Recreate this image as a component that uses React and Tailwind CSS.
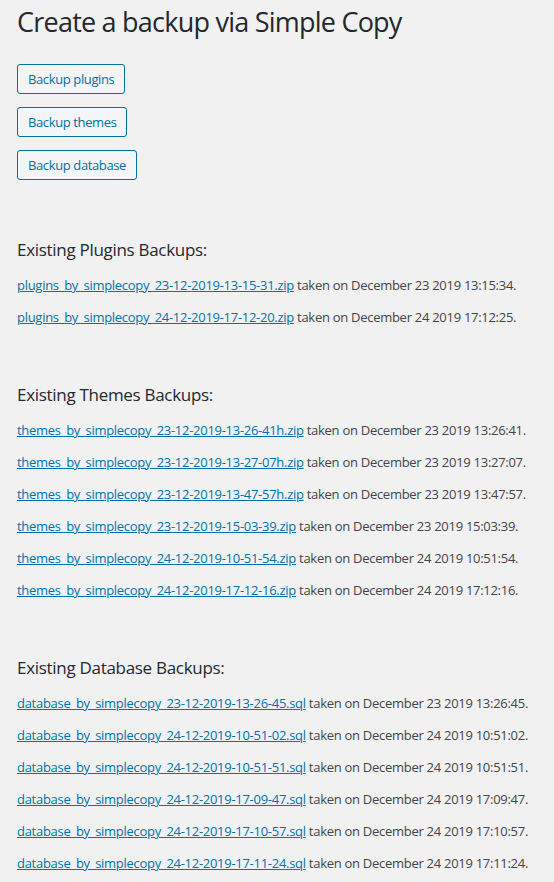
import React from "react";

const plugins = [
  ["plugins_by_simplecopy_23-12-2019-13-15-31.zip", "December 23 2019 13:15:34."],
  ["plugins_by_simplecopy_24-12-2019-17-12-20.zip", "December 24 2019 17:12:25."],
];
const themes = [
  ["themes_by_simplecopy_23-12-2019-13-26-41h.zip", "December 23 2019 13:26:41."],
  ["themes_by_simplecopy_23-12-2019-13-27-07h.zip", "December 23 2019 13:27:07."],
  ["themes_by_simplecopy_23-12-2019-13-47-57h.zip", "December 23 2019 13:47:57."],
  ["themes_by_simplecopy_23-12-2019-15-03-39.zip", "December 23 2019 15:03:39."],
  ["themes_by_simplecopy_24-12-2019-10-51-54.zip", "December 24 2019 10:51:54."],
  ["themes_by_simplecopy_24-12-2019-17-12-16.zip", "December 24 2019 17:12:16."],
];
const dbs = [
  ["database_by_simplecopy_23-12-2019-13-26-45.sql", "December 23 2019 13:26:45."],
  ["database_by_simplecopy_24-12-2019-10-51-02.sql", "December 24 2019 10:51:02."],
  ["database_by_simplecopy_24-12-2019-10-51-51.sql", "December 24 2019 10:51:51."],
  ["database_by_simplecopy_24-12-2019-17-09-47.sql", "December 24 2019 17:09:47."],
  ["database_by_simplecopy_24-12-2019-17-10-57.sql", "December 24 2019 17:10:57."],
  ["database_by_simplecopy_24-12-2019-17-11-24.sql", "December 24 2019 17:11:24."],
];

function Section({ title, items, className }) {
  return (
    <div className={className}>
      <h3 className="text-[17px] leading-[24px] text-[#23282d] font-normal tracking-[-0.3px]">{title}</h3>
      <div className="mt-[13px] flex flex-col gap-[12px]">
        {items.map(([f, d]) => (
          <p key={f} className="text-[13px] leading-[20px] text-[#444] whitespace-nowrap tracking-[-0.28px]">
            <a href="#" className="text-[#0073aa] underline">{f}</a> taken on {d}
          </p>
        ))}
      </div>
    </div>
  );
}

function Btn({ children }) {
  return (
    <button className="h-[30px] px-[10px] border border-[#0071a1] rounded-[3px] bg-[#f3f5f6] text-[#0071a1] text-[13px] leading-[28px] tracking-[-0.38px]">
      {children}
    </button>
  );
}

export default function App() {
  return (
    <div className="min-h-[882px] bg-[#f1f1f1] px-[17px] pt-[4px] pb-[20px]" style={{ fontFamily: '"Open Sans", "Noto Sans", sans-serif' }}>
      <h1 className="text-[27px] leading-[36px] text-[#23282d] font-medium tracking-[-0.77px] whitespace-nowrap">Create a backup via Simple Copy</h1>
      <div className="mt-[24px] flex flex-col items-start gap-[13px]">
        <Btn>Backup plugins</Btn>
        <Btn>Backup themes</Btn>
        <Btn>Backup database</Btn>
      </div>
      <Section className="mt-[58px]" title="Existing Plugins Backups:" items={plugins} />
      <Section className="mt-[56px]" title="Existing Themes Backups:" items={themes} />
      <Section className="mt-[56px]" title="Existing Database Backups:" items={dbs} />
    </div>
  );
}
